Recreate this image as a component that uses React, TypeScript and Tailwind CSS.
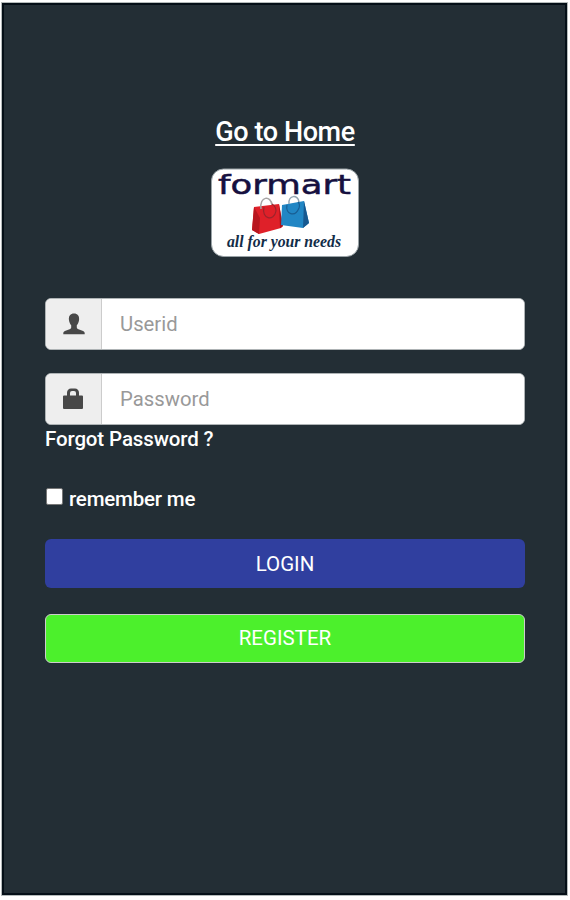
import type { ReactNode } from 'react'

function Logo() {
  return (
    <svg width="148" height="89" viewBox="0 0 148 89" className="block">
      <rect x="0.5" y="1" width="147" height="87.5" rx="12" fill="#ffffff" stroke="#9aa3a7" />
      <text
        x="7"
        y="26"
        textLength="133"
        lengthAdjust="spacingAndGlyphs"
        stroke="#16103f"
        strokeWidth="0.5"
        className="fill-[#16103f] font-['DejaVu_Sans',sans-serif] text-[27px]"
      >
        formart
      </text>

      {/* red bag */}
      <path d="M43 39 L68 36 L72 58 L70 60 L48 66 L41 62 Z" fill="#df2029" />
      <path d="M43 39 L41 62 L48 66 L49 50 Z" fill="#b8161f" />
      <path d="M68 36 L72 58 L69 60 Z" fill="#a9131c" />
      <path d="M50 41 C48 28 60 27 61 37" fill="none" stroke="#a7a4a4" strokeWidth="1.5" />
      <path d="M53 39 C50 51 63 54 65 43 C65 40 64 38 61 36" fill="none" stroke="#9b242c" strokeWidth="1.2" />

      {/* blue bag */}
      <path d="M71 37 L93 33 L98 55 L92 60 L70 57 Z" fill="#2186c4" />
      <path d="M93 33 L98 55 L92 60 Z" fill="#17588f" />
      <path d="M78 36 C77 27 87 26 88 34" fill="none" stroke="#93a5b2" strokeWidth="1.5" />
      <path d="M76 37 C74 46 84 50 88 40 C89 37 88 35 87 34" fill="none" stroke="#185e93" strokeWidth="1.2" />

      <text
        x="16"
        y="79"
        textLength="114"
        lengthAdjust="spacingAndGlyphs"
        className="fill-[#122c48] font-['Liberation_Serif',serif] text-[16px] font-bold italic"
      >
        all for your needs
      </text>
    </svg>
  )
}

function UserIcon() {
  return (
    <svg width="22" height="22" viewBox="0 0 22 22" fill="#484848">
      <path d="M11 0.5 C7.4 0.5 5.6 3 5.9 6.5 C6.1 9 7 11 8.2 12.3 V14.6 C8.2 15.3 7.8 15.7 7.2 16 L1.9 18.1 C0.8 18.6 0.3 19.3 0.3 20.3 V21.3 H21.7 V20.3 C21.7 19.3 21.2 18.6 20.1 18.1 L14.8 16 C14.2 15.7 13.8 15.3 13.8 14.6 V12.3 C15 11 15.9 9 16.1 6.5 C16.4 3 14.6 0.5 11 0.5 Z" />
    </svg>
  )
}

function LockIcon() {
  return (
    <svg width="20" height="22" viewBox="0 0 20 22" fill="#484848" className="-translate-x-px">
      <path d="M4 7.5 V4.8 C4 2.3 5.8 0.5 8 0.5 H12 C14.2 0.5 16 2.3 16 4.8 V7.5 H19 Q20 7.5 20 8.5 V20 Q20 21 19 21 H1 Q0 21 0 20 V8.5 Q0 7.5 1 7.5 Z M7 7.5 H13 V5 Q13 3 11 3 H9 Q7 3 7 5 Z" />
    </svg>
  )
}

function Field({ icon, placeholder, type }: { icon: ReactNode; placeholder: string; type: string }) {
  return (
    <div className="flex h-[52px] overflow-hidden rounded-md border border-[#aeb3b5] bg-white">
      <span className="flex w-14 shrink-0 items-center justify-center border-r border-[#cccccc] bg-[#eeeeee]">
        {icon}
      </span>
      <input
        type={type}
        placeholder={placeholder}
        className="min-w-0 flex-1 bg-white px-[18px] text-[20.3px] text-gray-700 outline-none placeholder:text-[#999999]"
      />
    </div>
  )
}

export default function App() {
  return (
    <div className="h-[900px] w-[570px] bg-white pl-0.5 pt-[3px] font-[Roboto,sans-serif]">
      <div className="flex h-[892px] w-[565px] flex-col border-2 border-[#050f17] bg-[#232e35] pt-[110px] pr-10 pl-[41px] text-white outline outline-[#b5bbbb]">
        <div className="flex flex-col items-center">
          <a
            href="#"
            className="h-[53px] text-[27px] leading-[34px] font-medium tracking-[-0.4px] underline decoration-2 underline-offset-3"
          >
            Go to Home
          </a>
          <Logo />
        </div>

        <form className="mt-[41px] flex flex-col">
          <Field type="text" placeholder="Userid" icon={<UserIcon />} />
          <div className="mt-[23px]">
            <Field type="password" placeholder="Password" icon={<LockIcon />} />
          </div>
          <a href="#" className="self-start text-[20.5px] leading-[28px] font-medium tracking-[-0.13px]">
            Forgot Password ?
          </a>

          <label className="mt-[31px] flex h-[30px] items-center text-[20.5px] font-medium tracking-[-0.2px]">
            <input
              type="checkbox"
              className="mr-1.5 mb-1.5 ml-px size-[17px] appearance-none rounded-xs border border-[#777777] bg-white"
            />
            remember me
          </label>

          <button type="button" className="mt-[25px] h-[49px] rounded-md bg-[#303f9f] pt-px text-[20.5px]">
            LOGIN
          </button>
          <button
            type="button"
            className="mt-[26px] h-[49px] rounded-md border border-[#cccccc] bg-[#4cf02c] text-[20.5px]"
          >
            REGISTER
          </button>
        </form>
      </div>
    </div>
  )
}
